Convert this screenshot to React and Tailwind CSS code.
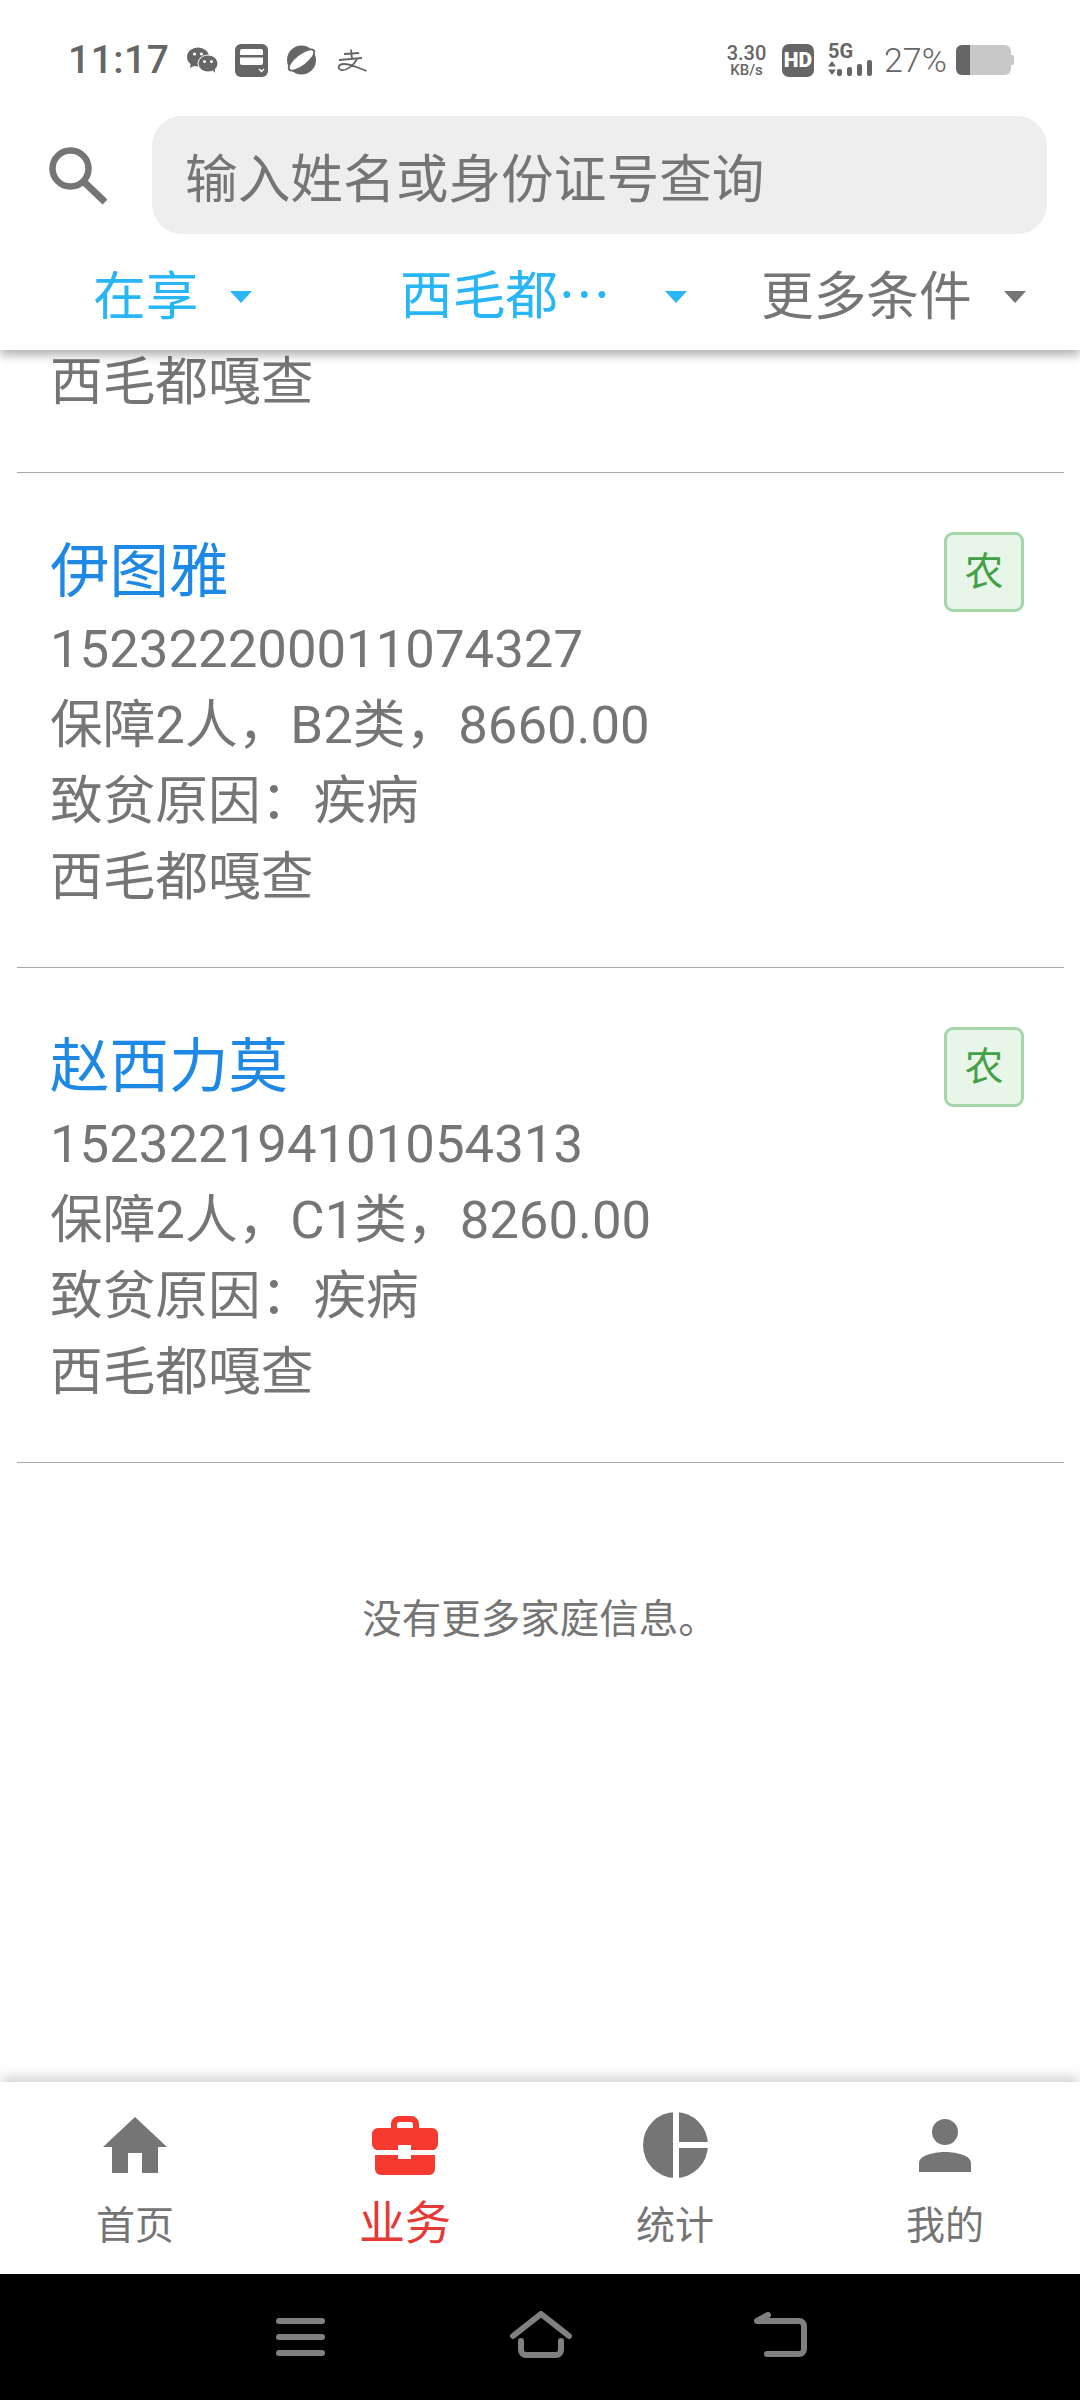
const rows = [
  { name: "伊图雅", id: "152322200011074327", info: "保障2人，B2类，8660.00" },
  { name: "赵西力莫", id: "152322194101054313", info: "保障2人，C1类，8260.00" },
];

function Caret({ className }) {
  return (
    <svg width="22" height="12" viewBox="0 0 22 12" className={className}>
      <path d="M0 0H22L11 12Z" fill="currentColor" />
    </svg>
  );
}

function StatusLeft() {
  return (
    <div className="flex items-center text-[#666666]">
      <span className="text-[39px] leading-[40px] font-medium tracking-[0.5px] w-[99px] whitespace-nowrap">11:17</span>
      <svg width="31" height="26" viewBox="0 0 31 26" className="ml-[20px]">
        <ellipse cx="11" cy="10" rx="11" ry="9.5" fill="#666" />
        <path d="M4 15L3 21L9 18Z" fill="#666" />
        <circle cx="7.5" cy="7" r="1.6" fill="#fff" />
        <circle cx="14.5" cy="7" r="1.6" fill="#fff" />
        <ellipse cx="21" cy="16.5" rx="10.5" ry="9" fill="#fff" />
        <ellipse cx="21" cy="16.5" rx="9.5" ry="8" fill="#666" />
        <path d="M25 22L28 26L28 20Z" fill="#666" />
        <circle cx="17.5" cy="14.5" r="1.5" fill="#fff" />
        <circle cx="24.5" cy="14.5" r="1.5" fill="#fff" />
      </svg>
      <svg width="33" height="33" viewBox="0 0 33 33" className="ml-[17px]">
        <rect width="33" height="33" rx="6" fill="#666" />
        <rect x="5" y="5" width="23" height="16" rx="2" fill="#fff" />
        <rect x="5" y="11" width="23" height="2.5" fill="#666" />
        <path d="M24 25L26.5 27.5L29 25" stroke="#fff" strokeWidth="1.5" fill="none" />
      </svg>
      <svg width="33" height="30" viewBox="0 0 33 30" className="ml-[17px]">
        <circle cx="16.5" cy="15" r="14.5" fill="#666" />
        <ellipse cx="16.5" cy="15" rx="16.5" ry="7" transform="rotate(-38 16.5 15)" fill="#666" />
        <ellipse cx="16.5" cy="15" rx="14.5" ry="5" transform="rotate(-38 16.5 15)" fill="#fff" />
      </svg>
      <svg width="30" height="23" viewBox="0 0 30 23" className="ml-[19px]" fill="none" stroke="#666" strokeWidth="1.8">
        <path d="M7 5L22 4M2 11L25 9M14 0.5L15 10" />
        <path d="M20 10C17 16 10 22 4 21C0 20 1 15 7 15C14 15 21 19 29.5 22" />
      </svg>
    </div>
  );
}

function StatusRight() {
  return (
    <div className="flex items-center text-[#666666]">
      <div className="w-[39px] flex flex-col items-center">
        <span className="text-[20px] leading-[20px] font-medium">3.30</span>
        <span className="text-[15px] leading-[15px] font-medium">KB/s</span>
      </div>
      <div className="ml-[16px] w-[32px] h-[33px] rounded-[7px] bg-[#666666] text-white flex items-center justify-center text-[21px] font-black leading-none">
        HD
      </div>
      <div className="ml-[14px] w-[44px] flex flex-col">
        <span className="text-[20px] leading-[15px] font-bold">5G</span>
        <svg width="44" height="16" viewBox="0 0 44 16" fill="#666" className="mt-[1px]">
          <path d="M0 6.5L4 1L8 6.5ZM0 9.5H8L4 15Z" />
          <rect x="9" y="9" width="5" height="7" rx="2" />
          <rect x="19" y="7" width="5" height="9" rx="2" />
          <rect x="29" y="4" width="5" height="12" rx="2" />
          <rect x="39" y="0" width="5" height="16" rx="2" />
        </svg>
      </div>
      <span className="ml-[12px] w-[60px] text-[34px] leading-[36px] font-light">27%</span>
      <div className="ml-[12px] flex items-center">
        <div className="w-[55px] h-[30px] rounded-[6px] bg-[#c8c8c8] overflow-hidden">
          <div className="w-[14px] h-full bg-[#666666]" />
        </div>
        <div className="w-[3px] h-[10px] rounded-r-[2px] bg-[#c8c8c8]" />
      </div>
    </div>
  );
}

function Header() {
  return (
    <header className="relative z-10 h-[350px] shrink-0 bg-white shadow-[0_5px_10px_rgba(0,0,0,0.32)]">
      <div className="h-[116px] pt-[30px] pb-[26px] pl-[68px] pr-[66px] flex items-center justify-between">
        <StatusLeft />
        <StatusRight />
      </div>
      <div className="flex items-center pl-[49px]">
        <svg width="58" height="58" viewBox="0 0 58 58" fill="none" stroke="#757575" className="mt-[2px]">
          <circle cx="21.5" cy="21.5" r="18" strokeWidth="6.5" />
          <path d="M34 34L56 55" strokeWidth="7" />
        </svg>
        <div className="ml-[45px] w-[895px] h-[118px] rounded-[30px] bg-[#eeeeee] pl-[33px] pt-[9px] flex items-center text-[52.7px] leading-[60px] text-[#757575]">
          输入姓名或身份证号查询
        </div>
      </div>
      <div className="h-[116px] pt-[9px] flex items-center text-[52.7px] leading-[60px]">
        <div className="w-[400px] pl-[93px] flex items-center text-[#29b6f6]">
          <span>在享</span>
          <Caret className="ml-[32px] mt-[1px]" />
        </div>
        <div className="w-[361px] flex items-center text-[#29b6f6]">
          <span className="-mt-[12px] font-['Noto_Sans_CJK_SC',sans-serif]">西毛都…</span>
          <Caret className="ml-[54px] mt-[1px]" />
        </div>
        <div className="flex items-center text-[#757575]">
          <span>更多条件</span>
          <Caret className="ml-[32px] mt-[1px]" />
        </div>
      </div>
    </header>
  );
}

function Row({ row }) {
  return (
    <div className="ml-[17px] mr-[16px] pl-[33px] pr-[40px] pt-[60px] pb-[52px] border-b border-[#a8a8a8] flex justify-between items-start">
      <div>
        <div className="text-[59.5px] leading-[78px] text-[#1e88e5]">{row.name}</div>
        <div className="text-[52.7px] leading-[76px] text-[#757575]">
          <div>{row.id}</div>
          <div>{row.info}</div>
          <div>致贫原因：疾病</div>
          <div>西毛都嘎查</div>
        </div>
      </div>
      <div className="-mt-[1px] w-[80px] h-[80px] rounded-[9px] border-[3px] border-[#a5d6a7] bg-[#e8f5e9] text-[#43a047] text-[39px] leading-none flex items-center justify-center">
        农
      </div>
    </div>
  );
}

function NavItem({ label, active, children }) {
  return (
    <div className="pt-[28px] flex flex-col items-center">
      <div className="h-[70px] flex items-center">{children}</div>
      {active ? (
        <span className="mt-[18px] text-[46px] leading-[50px] text-[#e53935]">{label}</span>
      ) : (
        <span className="mt-[21px] text-[39px] leading-[50px] text-[#757575]">{label}</span>
      )}
    </div>
  );
}

function BottomNav() {
  return (
    <nav className="relative z-10 h-[192px] shrink-0 bg-white grid grid-cols-4 shadow-[0_-4px_14px_rgba(0,0,0,0.2)]">
      <NavItem label="首页">
        <svg width="64" height="56" viewBox="0 0 64 56">
          <path d="M32 0L64 30H55V56H39V36H25V56H9V30H0Z" fill="#757575" />
        </svg>
      </NavItem>
      <NavItem label="业务" active>
        <svg width="66" height="59" viewBox="0 0 66 59">
          <path d="M22 13V8a5 5 0 0 1 5-5h12a5 5 0 0 1 5 5v5" fill="none" stroke="#f63a30" strokeWidth="6" />
          <rect x="0" y="12" width="66" height="22" rx="6" fill="#f63a30" />
          <rect x="3" y="30" width="60" height="29" rx="6" fill="#f63a30" />
          <rect x="0" y="34" width="66" height="5" fill="#fff" />
          <rect x="26" y="29" width="13" height="14" fill="#fff" />
        </svg>
      </NavItem>
      <NavItem label="统计">
        <svg width="65" height="66" viewBox="0 0 65 66">
          <ellipse cx="32.5" cy="33" rx="32.5" ry="33" fill="#757575" />
          <rect x="30" y="0" width="6" height="66" fill="#fff" />
          <rect x="36" y="30" width="29" height="6" fill="#fff" />
        </svg>
      </NavItem>
      <NavItem label="我的">
        <svg width="52" height="53" viewBox="0 0 52 53">
          <circle cx="26" cy="13" r="13" fill="#757575" />
          <path d="M0 53V44C0 37 13 33 26 33S52 37 52 44V53Z" fill="#757575" />
        </svg>
      </NavItem>
    </nav>
  );
}

function SystemBar() {
  return (
    <div className="h-[126px] shrink-0 bg-black pl-[276px] flex items-center">
      <div className="w-[49px] flex flex-col gap-[10px]">
        <div className="h-[6px] rounded-full bg-[#808080]" />
        <div className="h-[6px] rounded-full bg-[#808080]" />
        <div className="h-[6px] rounded-full bg-[#808080]" />
      </div>
      <svg width="62" height="47" viewBox="0 0 62 47" fill="none" stroke="#808080" strokeWidth="6" strokeLinecap="round" className="ml-[185px] -mt-[6px]">
        <path d="M3 25L31 3L59 25" />
        <path d="M11 30V39a5 5 0 0 0 5 5H46a5 5 0 0 0 5-5V30" />
      </svg>
      <svg width="53" height="45" viewBox="0 0 53 45" fill="none" stroke="#808080" strokeWidth="6" strokeLinecap="round" strokeLinejoin="round" className="ml-[182px] -mt-[6px]">
        <path d="M14 3L3 9H45a5 5 0 0 1 5 5V37a5 5 0 0 1-5 5H13" />
      </svg>
    </div>
  );
}

export default function App() {
  return (
    <div className="w-[1080px] h-[2400px] flex flex-col overflow-hidden bg-white font-['Roboto','Noto_Sans_CJK_SC',sans-serif]">
      <Header />
      <main className="flex-1 overflow-hidden">
        <div className="ml-[17px] mr-[16px] pl-[33px] pb-[52px] border-b border-[#a8a8a8] -mt-[6px] text-[52.7px] leading-[76px] text-[#757575]">
          西毛都嘎查
        </div>
        {rows.map((row) => (
          <Row key={row.id} row={row} />
        ))}
        <p className="pt-[132px] text-center text-[39.5px] leading-[50px] text-[#757575]">没有更多家庭信息。</p>
      </main>
      <BottomNav />
      <SystemBar />
    </div>
  );
}
